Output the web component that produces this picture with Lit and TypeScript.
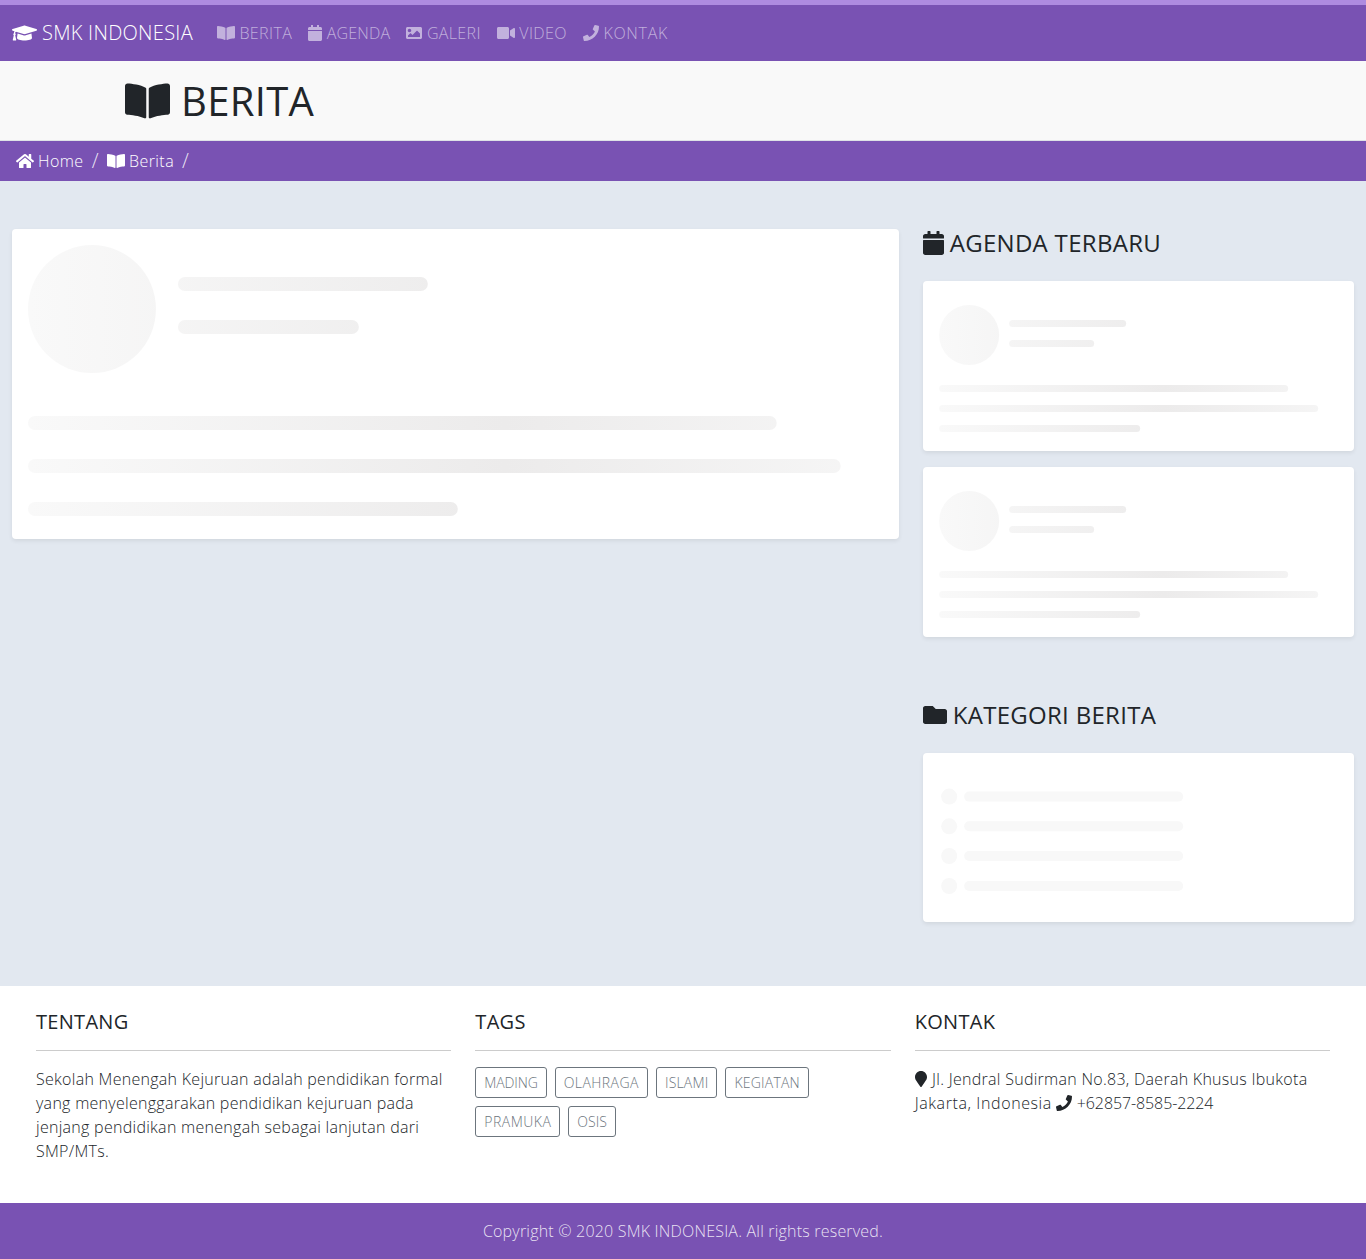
import {LitElement, html, css, svg} from 'lit';
import {customElement} from 'lit/decorators.js';

const ICONS: Record<string, [number, string]> = {
  cap: [640, 'M622.34 153.2L343.4 67.5c-15.2-4.67-31.6-4.67-46.79 0L17.66 153.2c-23.54 7.23-23.54 38.36 0 45.59l48.63 14.94c-10.67 13.19-17.23 29.28-17.88 46.9C38.78 266.15 32 276.11 32 288c0 10.78 5.68 19.85 13.86 25.65L20.33 428.53C18.11 438.52 25.71 448 35.94 448h56.11c10.24 0 17.84-9.48 15.62-19.47L82.14 313.65C90.32 307.85 96 298.78 96 288c0-11.57-6.47-21.25-15.66-26.87.76-15.02 8.44-28.3 20.69-36.72L296.6 284.5c9.06 2.78 26.44 6.25 46.79 0l278.95-85.7c23.55-7.24 23.55-38.37 0-45.6zM352.79 315.09c-28.53 8.76-52.84 3.92-65.59 0l-145.02-44.55L128 384c0 35.35 85.96 64 192 64s192-28.65 192-64l-14.18-113.47-145.03 44.56z'],
  book: [576, 'M542.22 32.05c-54.8 3.11-163.72 14.43-230.96 55.59-4.64 2.84-7.27 7.89-7.27 13.17v363.87c0 11.55 12.63 18.85 23.28 13.49 69.18-34.82 169.23-44.32 218.7-46.92 16.89-.89 30.02-14.43 30.02-30.66V62.75c.01-17.71-15.35-31.74-33.77-30.7zM264.73 87.64C197.5 46.48 88.58 35.17 33.78 32.05 15.36 31.01 0 45.04 0 62.75V400.6c0 16.24 13.13 29.78 30.02 30.66 49.49 2.6 149.59 12.11 218.77 46.95 10.62 5.35 23.21-1.94 23.21-13.46V100.63c0-5.29-2.62-10.14-7.27-12.99z'],
  calendar: [448, 'M12 192h424c6.6 0 12 5.4 12 12v260c0 26.5-21.5 48-48 48H48c-26.5 0-48-21.5-48-48V204c0-6.6 5.4-12 12-12zm436-44v-36c0-26.5-21.5-48-48-48h-48V12c0-6.6-5.4-12-12-12h-40c-6.6 0-12 5.4-12 12v52H160V12c0-6.6-5.4-12-12-12h-40c-6.6 0-12 5.4-12 12v52H48C21.5 64 0 85.5 0 112v36c0 6.6 5.4 12 12 12h424c6.6 0 12-5.4 12-12z'],
  image: [512, 'M464 448H48c-26.51 0-48-21.49-48-48V112c0-26.51 21.49-48 48-48h416c26.51 0 48 21.49 48 48v288c0 26.51-21.49 48-48 48zM112 120c-30.928 0-56 25.072-56 56s25.072 56 56 56 56-25.072 56-56-25.072-56-56-56zM64 384h384V272l-87.515-87.515c-4.686-4.686-12.284-4.686-16.971 0L208 320l-55.515-55.515c-4.686-4.686-12.284-4.686-16.971 0L64 336v48z'],
  video: [576, 'M336.2 64H47.8C21.4 64 0 85.4 0 111.8v288.4C0 426.6 21.4 448 47.8 448h288.4c26.4 0 47.8-21.4 47.8-47.8V111.8c0-26.4-21.4-47.8-47.8-47.8zm189.4 37.7L416 177.3v157.4l109.6 75.5c21.2 14.6 50.4-.3 50.4-25.8V127.5c0-25.4-29.1-40.4-50.4-25.8z'],
  phone: [512, 'M493.4 24.6l-104-24c-11.3-2.6-22.9 3.3-27.5 13.9l-48 112c-4.2 9.8-1.4 21.3 6.9 28l60.6 49.6c-36 76.7-98.9 140.5-177.2 177.2l-49.6-60.6c-6.8-8.3-18.2-11.1-28-6.9l-112 48C3.9 366.5-2 378.1.6 389.4l24 104C27.1 504.2 36.7 512 48 512c256.1 0 464-207.5 464-464 0-11.2-7.7-20.9-18.6-23.4z'],
  home: [576, 'M280.37 148.26L96 300.11V464a16 16 0 0 0 16 16l112.06-.29a16 16 0 0 0 15.92-16V368a16 16 0 0 1 16-16h64a16 16 0 0 1 16 16v95.64a16 16 0 0 0 16 16.05L464 480a16 16 0 0 0 16-16V300L295.67 148.26a12.19 12.19 0 0 0-15.3 0zM571.6 251.47L488 182.56V44.05a12 12 0 0 0-12-12h-56a12 12 0 0 0-12 12v72.61L318.47 43a48 48 0 0 0-61 0L4.34 251.47a12 12 0 0 0-1.6 16.9l25.5 31A12 12 0 0 0 45.15 301l235.22-193.74a12.19 12.19 0 0 1 15.3 0L530.9 301a12 12 0 0 0 16.9-1.6l25.5-31a12 12 0 0 0-1.7-16.93z'],
  folder: [512, 'M464 128H272l-64-64H48C21.49 64 0 85.49 0 112v288c0 26.51 21.49 48 48 48h416c26.51 0 48-21.49 48-48V176c0-26.51-21.49-48-48-48z'],
  marker: [384, 'M172.268 501.67C26.97 291.031 0 269.413 0 192 0 85.961 85.961 0 192 0s192 85.961 192 192c0 77.413-26.97 99.031-172.268 309.67-9.535 13.774-29.93 13.773-39.464 0z'],
};

const icon = (name: string) => {
  const [w, d] = ICONS[name];
  return html`<svg class="fa" viewBox="0 0 ${w} 512" fill="currentColor"><path d=${d}></path></svg>`;
};

// third value is letter-spacing in px, Open Sans runs narrower than the original font on some words
const NAV: [string, string, number][] = [
  ['book', 'BERITA', 0.4],
  ['calendar', 'AGENDA', 0.2],
  ['image', 'GALERI', 0.35],
  ['video', 'VIDEO', 0.4],
  ['phone', 'KONTAK', 0.7],
];
const TAGS: [string, number][] = [
  ['MADING', -0.13],
  ['OLAHRAGA', 0.45],
  ['ISLAMI', 0.2],
  ['KEGIATAN', 0.2],
  ['PRAMUKA', 0.48],
  ['OSIS', 0],
];

@customElement('app-root')
export class AppRoot extends LitElement {
  static override styles = css`
    :host {
      display: block;
      font-family: 'Open Sans', 'Noto Sans', sans-serif;
      font-weight: 300;
      font-size: 16px;
      line-height: 24px;
      letter-spacing: 0.2px;
      color: #212529;
      background: #e2e8f0;
    }
    .fa { height: 1em; width: auto; flex: none; display: block; }
    .nav {
      display: flex;
      align-items: center;
      height: 56px;
      padding: 0 12px;
      background: #7952b3;
      border-top: 5px solid #ae8be0;
    }
    .brand { display: flex; align-items: center; gap: 5px; color: #fff; font-size: 20px; letter-spacing: 0.28px; margin-right: 16px; }
    .link { display: flex; align-items: center; gap: 4.5px; padding: 0 8px; color: rgba(255, 255, 255, 0.55); }
    .head {
      display: flex;
      align-items: center;
      gap: 11px;
      height: 79px;
      padding-left: 125px;
      background: #f9f9f9;
      border-bottom: 1px solid #dee2e6;
      font-size: 40px;
      font-weight: 400;
      letter-spacing: 0.33px;
    }
    .crumbs {
      display: flex;
      align-items: center;
      height: 40px;
      padding: 0 16px;
      background: #7952b3;
      color: #fff;
      letter-spacing: 0.45px;
    }
    .crumb { display: flex; align-items: center; gap: 4px; }
    .sep { padding: 0 8px; font-size: 20px; color: rgba(255, 255, 255, 0.85); }
    .main { display: flex; padding: 48px 0 64px; }
    .left { width: 66.6667%; padding: 0 12px; box-sizing: border-box; }
    .right { width: 33.3333%; padding: 0 12px; box-sizing: border-box; }
    .card {
      background: #fff;
      border-radius: 4px;
      box-shadow: 0 2px 4px rgba(0, 0, 0, 0.075);
      padding: 16px;
      margin-bottom: 16px;
    }
    .card svg { display: block; width: 100%; }
    .title { display: flex; align-items: center; gap: 6px; font-size: 24px; height: 28px; margin: 0 0 24px; font-weight: 400; letter-spacing: 0.3px; }
    .section + .section { margin-top: 64px; }
    .section .card:last-child { margin-bottom: 0; }
    .foot {
      display: grid;
      grid-template-columns: repeat(3, 1fr);
      gap: 24px;
      padding: 24px 36px 40px;
      background: #fff;
    }
    .foot h5 { margin: 0; font-size: 20px; line-height: 24px; font-weight: 400; letter-spacing: 0.3px; }
    .foot hr { margin: 16px 0; border: 0; border-top: 1px solid #ccc; }
    .foot p { margin: 0; letter-spacing: 0.28px; }
    .tags { display: flex; flex-wrap: wrap; gap: 8px; }
    .tag {
      height: 31px;
      box-sizing: border-box;
      padding: 0 8px;
      line-height: 29px;
      font-size: 14px;
      color: #6c757d;
      border: 1px solid #6c757d;
      border-radius: 3px;
    }
    .inline { display: inline-block; vertical-align: -2px; }
    .pin { margin-right: 1px; }
    .place { letter-spacing: 0.6px; }
    .number { letter-spacing: -0.1px; }
    .copy {
      height: 56px;
      line-height: 56px;
      text-align: center;
      background: #7952b3;
      color: rgba(255, 255, 255, 0.85);
    }
  `;

  private loader(id: string, w: number, h: number, dark: number, shapes: unknown) {
    return html`<svg viewBox="0 0 ${w} ${h}" height=${h}>
      <defs>
        ${svg`<linearGradient id=${id} gradientUnits="userSpaceOnUse" x1="0" x2=${dark * 2} y1="0" y2="0">
          <stop offset="0" stop-color="#f9f9f9"></stop>
          <stop offset="0.5" stop-color="#ecebeb"></stop>
          <stop offset="1" stop-color="#f9f9f9"></stop>
        </linearGradient>`}
      </defs>
      <g fill="url(#${id})">${shapes}</g>
    </svg>`;
  }

  private agendaLoader(id: string) {
    return this.loader(id, 399, 138, 225, svg`
      <circle cx="30" cy="38" r="30"></circle>
      <rect x="70" y="23" width="117" height="7" rx="3.5"></rect>
      <rect x="70" y="43" width="85" height="7" rx="3.5"></rect>
      <rect x="0" y="88" width="349" height="7" rx="3.5"></rect>
      <rect x="0" y="108" width="379" height="7" rx="3.5"></rect>
      <rect x="0" y="128" width="201" height="7" rx="3.5"></rect>
    `);
  }

  override render() {
    return html`
      <nav class="nav">
        <div class="brand">${icon('cap')}<span>SMK INDONESIA</span></div>
        ${NAV.map(([i, t, ls]) => html`<div class="link">${icon(i)}<span style="letter-spacing:${ls}px">${t}</span></div>`)}
      </nav>
      <header class="head">${icon('book')}<span>BERITA</span></header>
      <div class="crumbs">
        <div class="crumb">${icon('home')}<span>Home</span></div>
        <span class="sep">/</span>
        <div class="crumb">${icon('book')}<span>Berita</span></div>
        <span class="sep">/</span>
      </div>
      <main class="main">
        <div class="left">
          <div class="card">
            ${this.loader('g-main', 855, 278, 477, svg`
              <circle cx="64" cy="64" r="64"></circle>
              <rect x="150" y="32" width="250" height="14" rx="7"></rect>
              <rect x="150" y="75" width="181" height="14" rx="7"></rect>
              <rect x="0" y="171" width="749" height="14" rx="7"></rect>
              <rect x="0" y="214" width="813" height="14" rx="7"></rect>
              <rect x="0" y="257" width="430" height="14" rx="7"></rect>
            `)}
          </div>
        </div>
        <div class="right">
          <div class="section">
            <h4 class="title">${icon('calendar')}<span>AGENDA TERBARU</span></h4>
            <div class="card">${this.agendaLoader('g-a1')}</div>
            <div class="card">${this.agendaLoader('g-a2')}</div>
          </div>
          <div class="section">
            <h4 class="title">${icon('folder')}<span>KATEGORI BERITA</span></h4>
            <div class="card">
              <svg viewBox="0 0 399 137" height="137">
                <g fill="#f8f8f8">
                  ${[27.6, 57.3, 87, 117].map(y => svg`
                    <circle cx="10" cy=${y} r="8"></circle>
                    <rect x="25" y=${y - 5} width="219" height="10" rx="5"></rect>
                  `)}
                </g>
              </svg>
            </div>
          </div>
        </div>
      </main>
      <footer class="foot">
        <section>
          <h5>TENTANG</h5>
          <hr />
          <p>Sekolah Menengah Kejuruan adalah pendidikan formal yang menyelenggarakan pendidikan kejuruan pada jenjang pendidikan menengah sebagai lanjutan dari SMP/MTs.</p>
        </section>
        <section>
          <h5>TAGS</h5>
          <hr />
          <div class="tags">${TAGS.map(([t, ls]) => html`<span class="tag" style="letter-spacing:${ls}px">${t}</span>`)}</div>
        </section>
        <section>
          <h5>KONTAK</h5>
          <hr />
          <p><span class="inline pin">${icon('marker')}</span> Jl. Jendral Sudirman No.83, Daerah Khusus Ibukota<br /><span class="place">Jakarta, Indonesia</span> <span class="inline">${icon('phone')}</span> <span class="number">+62857-8585-2224</span></p>
        </section>
      </footer>
      <div class="copy">Copyright © 2020 SMK INDONESIA. All rights reserved.</div>
    `;
  }
}
